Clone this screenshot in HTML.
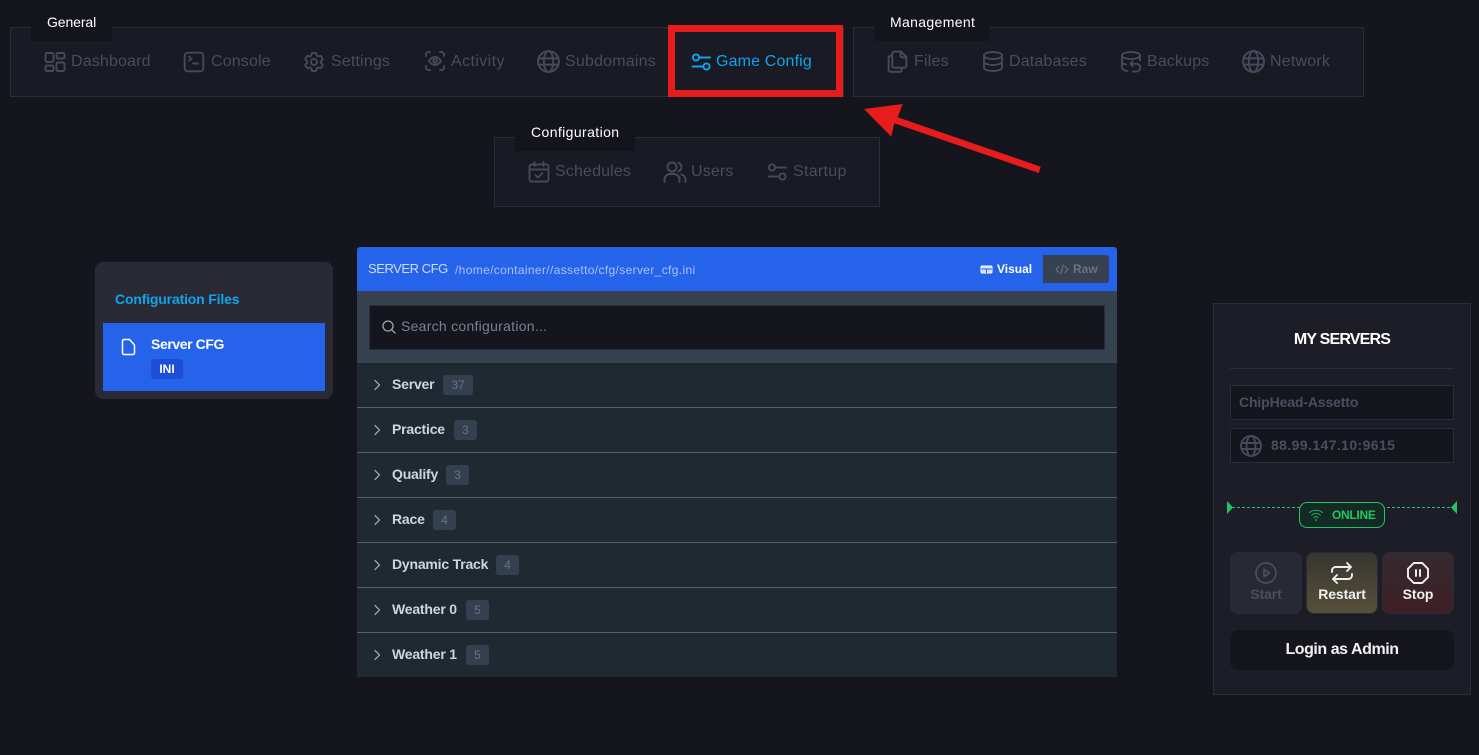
<!DOCTYPE html>
<html>
<head>
<meta charset="utf-8">
<style>
html,body{margin:0;padding:0;width:1479px;height:755px;overflow:hidden;background:#14151d;font-family:"Liberation Sans",sans-serif}
.a{position:absolute}
.t{position:absolute;white-space:nowrap;line-height:20px;height:20px}
.box{position:absolute;background:#191a23;border:1px solid #2a2c38;box-sizing:border-box}
.tab{position:absolute;background:#13141c;box-sizing:border-box}
.lab{position:absolute;white-space:nowrap;color:#fff;font-size:14px;line-height:20px;height:20px}
.n{position:absolute;white-space:nowrap;color:#474d5c;font-size:16px;line-height:22px;height:22px;letter-spacing:.15px}
svg.i{position:absolute;fill:none;stroke:#444a59;stroke-width:1.9;stroke-linecap:round;stroke-linejoin:round}
.row{position:absolute;left:357px;width:760px;height:45px;background:#1f2932;border-bottom:1px solid #56606c;box-sizing:border-box}
.rt{position:absolute;white-space:nowrap;left:392px;color:#d1d5db;font-size:14px;font-weight:700;line-height:20px;height:20px;letter-spacing:-.2px}
.b{position:absolute;height:20px;background:#344050;border-radius:3px;color:#6b7280;font-size:12px;line-height:20px;text-align:center}
svg.c{position:absolute;left:371px;width:12px;height:12px;fill:none;stroke:#9ca3af;stroke-width:1.3;stroke-linecap:round;stroke-linejoin:round}
.btn{position:absolute;top:552px;width:72px;height:62px;border-radius:8px;box-sizing:border-box;border:1px solid #2a2c38}
.bl{position:absolute;left:0;width:100%;text-align:center;top:31px;font-size:14px;font-weight:700;line-height:20px;letter-spacing:-.1px}
</style>
</head>
<body>
<!-- nav boxes -->
<div class="box" style="left:10px;top:27px;width:834px;height:70px"></div>
<div class="tab" style="left:31px;top:10px;width:81px;height:31px"></div>
<div class="lab" style="left:47px;top:12px;letter-spacing:-.1px">General</div>

<div class="box" style="left:853px;top:27px;width:511px;height:70px"></div>
<div class="tab" style="left:874px;top:10px;width:116px;height:31px"></div>
<div class="lab" style="left:890px;top:12px;letter-spacing:.35px">Management</div>

<div class="box" style="left:494px;top:137px;width:386px;height:70px"></div>
<div class="tab" style="left:515px;top:120px;width:120px;height:31px"></div>
<div class="lab" style="left:531px;top:122px;letter-spacing:.4px">Configuration</div>

<!-- General -->
<svg class="i" style="left:43px;top:50px" width="24" height="24" viewBox="0 0 24 24"><path d="M4 3h5a1.500 1.500 0 0 1 1.500 1.500v6a1.500 1.500 0 0 1-1.500 1.500h-5a1.500 1.500 0 0 1-1.500-1.500v-6a1.500 1.500 0 0 1 1.500-1.500zM4 15.500h5a1.500 1.500 0 0 1 1.500 1.500v2.500a1.500 1.500 0 0 1-1.500 1.500h-5a1.500 1.500 0 0 1-1.500-1.500v-2.500a1.500 1.500 0 0 1 1.500-1.500zM15 12.500h5a1.500 1.500 0 0 1 1.500 1.500v5.500a1.500 1.500 0 0 1-1.500 1.500h-5a1.500 1.500 0 0 1-1.500-1.500v-5.500a1.500 1.500 0 0 1 1.500-1.500zM15 3h5a1.500 1.500 0 0 1 1.500 1.500v2.500a1.500 1.500 0 0 1-1.500 1.500h-5a1.500 1.500 0 0 1-1.500-1.500v-2.500a1.500 1.500 0 0 1 1.500-1.500z"/></svg>
<div class="n" style="left:71px;top:51px">Dashboard</div>

<svg class="i" style="left:182px;top:50px" width="24" height="24" viewBox="0 0 24 24"><path d="M5.500 2.700h13a3 3 0 0 1 2.800 2.800v13a3 3 0 0 1-2.800 2.800h-13a3 3 0 0 1-2.800-2.800v-13a3 3 0 0 1 2.800-2.800zM7 6.800l2.500 1.900L7 10.600M11 13.500h5"/></svg>
<div class="n" style="left:211px;top:51px">Console</div>

<svg class="i" style="left:302px;top:50px" width="24" height="24" viewBox="0 0 24 24"><path d="M9.594 3.940c.09-.542.56-.94 1.110-.94h2.593c.55 0 1.020.398 1.110.94l.213 1.281c.063.374.313.686.645.87.074.04.147.083.22.127.325.196.72.257 1.075.124l1.217-.456a1.125 1.125 0 0 1 1.370.49l1.296 2.247a1.125 1.125 0 0 1-.26 1.431l-1.003.827c-.293.241-.438.613-.43.992a7.723 7.723 0 0 1 0 .255c-.008.378.137.75.43.991l1.004.827c.424.35.534.955.26 1.430l-1.298 2.247a1.125 1.125 0 0 1-1.369.491l-1.217-.456c-.355-.133-.75-.072-1.076.124a6.470 6.470 0 0 1-.22.128c-.331.183-.581.495-.644.869l-.213 1.281c-.09.543-.56.94-1.110.94h-2.594c-.55 0-1.019-.398-1.110-.94l-.213-1.281c-.062-.374-.312-.686-.644-.87a6.520 6.520 0 0 1-.22-.127c-.325-.196-.72-.257-1.076-.124l-1.217.456a1.125 1.125 0 0 1-1.369-.49l-1.297-2.247a1.125 1.125 0 0 1 .26-1.431l1.004-.827c.292-.24.437-.613.43-.991a6.932 6.932 0 0 1 0-.255c.007-.38-.138-.751-.43-.992l-1.004-.827a1.125 1.125 0 0 1-.26-1.430l1.297-2.247a1.125 1.125 0 0 1 1.370-.491l1.216.456c.356.133.751.072 1.076-.124.072-.044.146-.086.22-.128.332-.183.582-.495.644-.869l.214-1.280Z"/><path d="M15 12a3 3 0 1 1-6 0 3 3 0 0 1 6 0Z"/></svg>
<div class="n" style="left:331px;top:51px">Settings</div>

<svg class="i" style="left:423px;top:49px" width="24" height="24" viewBox="0 0 24 24"><path d="M3 7V5.500A2.500 2.500 0 0 1 5.500 3H7M17 3h1.500A2.500 2.500 0 0 1 21 5.500V7M21 17v1.500a2.500 2.500 0 0 1-2.500 2.500H17M7 21H5.500A2.500 2.500 0 0 1 3 18.500V17"/><path d="M6 12c1.800-2.800 3.800-4 6-4s4.200 1.200 6 4c-1.800 2.800-3.800 4-6 4s-4.200-1.200-6-4z"/><circle cx="12" cy="12" r="1.800"/></svg>
<div class="n" style="left:451px;top:51px;letter-spacing:.4px">Activity</div>

<svg class="i" style="left:536px;top:49px" width="25" height="25" viewBox="0 0 24 24"><circle cx="12" cy="12" r="10"/><ellipse cx="12" cy="12" rx="4.500" ry="10"/><path d="M2.600 9h18.800M2.600 15h18.800"/></svg>
<div class="n" style="left:565px;top:51px;letter-spacing:.2px">Subdomains</div>

<svg class="i" style="left:689px;top:50px;stroke:#0ea5e9" width="24" height="24" viewBox="0 0 24 24"><circle cx="7" cy="7.500" r="3.100"/><path d="M10.500 7.500h10.500M3.500 16.500h10.500"/><circle cx="17.500" cy="16.500" r="3.100"/></svg>
<div class="n" style="left:716px;top:51px;color:#0ea5e9">Game Config</div>

<!-- Management -->
<svg class="i" style="left:886px;top:49px" width="25" height="25" viewBox="0 0 24 24"><path d="M8 2.500h6.500l5 5V16a2 2 0 0 1-2 2H8a2 2 0 0 1-2-2V4.500a2 2 0 0 1 2-2zM14 2.500v4a1.500 1.500 0 0 0 1.500 1.500h4"/><path d="M6 6.500H4.500a2 2 0 0 0-2 2V20a2 2 0 0 0 2 2H13a2 2 0 0 0 2-2v-2"/></svg>
<div class="n" style="left:914px;top:51px;letter-spacing:.2px">Files</div>

<svg class="i" style="left:981px;top:49px" width="24" height="25" viewBox="0 0 24 24"><path d="M12 2.500c5 0 9 1.500 9 3.500s-4 3.500-9 3.500S3 8 3 6s4-3.500 9-3.500z"/><path d="M3 6v12c0 2 4 3.500 9 3.500s9-1.500 9-3.500V6M3 12c0 2 4 3.500 9 3.500s9-1.500 9-3.500"/></svg>
<div class="n" style="left:1009px;top:51px">Databases</div>

<svg class="i" style="left:1119px;top:49px" width="24" height="25" viewBox="0 0 24 24"><path d="M12 2.500c5 0 9 1.500 9 3.500s-4 3.500-9 3.500S3 8 3 6s4-3.500 9-3.500z"/><path d="M3 6v12c0 1.800 2.400 3.100 5.500 3.400M21 6v5M3 12c0 1.400 1.600 2.500 4 3.100"/><path d="M13.500 12l-2 2.300 2 2.300M11.500 14.300h6a3.800 3.800 0 0 1 0 7.700h-3.500"/></svg>
<div class="n" style="left:1147px;top:51px">Backups</div>

<svg class="i" style="left:1241px;top:49px" width="25" height="25" viewBox="0 0 24 24"><circle cx="12" cy="12" r="10"/><ellipse cx="12" cy="12" rx="4.500" ry="10"/><path d="M2.600 9h18.800M2.600 15h18.800"/></svg>
<div class="n" style="left:1270px;top:51px;letter-spacing:.2px">Network</div>

<!-- Configuration -->
<svg class="i" style="left:527px;top:160px" width="24" height="24" viewBox="0 0 24 24"><path d="M4.500 4.500h15A2 2 0 0 1 21.500 6.500v13a2 2 0 0 1-2 2h-15a2 2 0 0 1-2-2v-13a2 2 0 0 1 2-2zM2.500 9.500h19M7.500 2v4M16.500 2v4M8.500 15l2.500 2.500 4.500-4.500"/></svg>
<div class="n" style="left:555px;top:161px">Schedules</div>

<svg class="i" style="left:663px;top:160px" width="24" height="24" viewBox="0 0 24 24"><circle cx="9" cy="7" r="4.500"/><path d="M1.500 22v-2.500A5.500 5.500 0 0 1 7 14h4a5.500 5.500 0 0 1 5.500 5.500V22M15.500 2.800a4.500 4.500 0 0 1 0 8.400M18.500 14.400a5.500 5.500 0 0 1 4 5.100V22"/></svg>
<div class="n" style="left:691px;top:161px">Users</div>

<svg class="i" style="left:765px;top:160px" width="24" height="24" viewBox="0 0 24 24"><circle cx="7" cy="7.500" r="3.100"/><path d="M10.500 7.500h10.500M3.500 16.500h10.500"/><circle cx="17.500" cy="16.500" r="3.100"/></svg>
<div class="n" style="left:793px;top:161px;letter-spacing:.3px">Startup</div>

<!-- annotation -->
<div class="a" style="left:668px;top:25px;width:175px;height:72px;border:7px solid #e71c1c;box-sizing:border-box"></div>
<svg class="a" style="left:0;top:0" width="1479" height="755"><polygon fill="#e71c1c" points="864,109 902.700,104 897.700,117.300 1040.700,166.700 1038.700,173 894.300,123.300 891.300,136.700"/></svg>

<!-- left card -->
<div class="a" style="left:95px;top:262px;width:238px;height:137px;background:#2a2a37;border-radius:8px"></div>
<div class="t" style="left:115px;top:289px;color:#0ea5e9;font-size:14px;font-weight:700;letter-spacing:-.17px">Configuration Files</div>
<div class="a" style="left:103px;top:323px;width:222px;height:68px;background:#2563eb"></div>
<svg class="a" style="left:120px;top:338px;fill:none;stroke:#fff;stroke-width:1.500;stroke-linejoin:round" width="18" height="18" viewBox="0 0 18 18"><path d="M4 1.500h5.500L14.500 7v8a1.500 1.500 0 0 1-1.500 1.500H4A1.500 1.500 0 0 1 2.500 15V3A1.500 1.500 0 0 1 4 1.500z"/></svg>
<div class="t" style="left:151px;top:334px;color:#fff;font-size:14px;font-weight:700;letter-spacing:-.4px">Server CFG</div>
<div class="a" style="left:151px;top:359px;width:32px;height:20px;background:#1d4ed8;border-radius:3px;color:#fff;font-size:12px;font-weight:700;line-height:20px;text-align:center">INI</div>

<!-- main panel -->
<div class="a" style="left:357px;top:247px;width:760px;height:44px;background:#2563eb;border-radius:3px 3px 0 0"></div>
<div class="t" style="left:368px;top:259px;color:#d0dcfb;font-size:13px;letter-spacing:-.45px">SERVER CFG</div>
<div class="t" style="left:455px;top:260px;color:#a9c3f8;font-size:12px;letter-spacing:.35px">/home/container//assetto/cfg/server_cfg.ini</div>
<svg class="a" style="left:980px;top:264px" width="13" height="11" viewBox="0 0 13 11"><rect x="1" y="2" width="11" height="7" rx="1" fill="#cfe0ff" stroke="#fff"/><path d="M1 5h11M6.500 5v4" stroke="#2563eb" stroke-width="1"/></svg>
<div class="t" style="left:997px;top:259px;color:#fff;font-size:12px;font-weight:700">Visual</div>
<div class="a" style="left:1043px;top:255px;width:66px;height:28px;background:#374151;border-radius:0 3px 3px 0"></div>
<svg class="a" style="left:1055px;top:263px;fill:none;stroke:#6b7280;stroke-width:1.100;stroke-linecap:round;stroke-linejoin:round" width="14" height="13" viewBox="0 0 14 13"><path d="M4 3.500L1 6.500l3 3M10 3.500l3 3-3 3M8.300 2L5.700 11"/></svg>
<div class="t" style="left:1073px;top:259px;color:#6b7280;font-size:12px;font-weight:700">Raw</div>

<div class="a" style="left:357px;top:291px;width:760px;height:73px;background:#36424f;border-bottom:1px solid #465260;box-sizing:border-box"></div>
<div class="a" style="left:369px;top:305px;width:736px;height:45px;background:#14151d;border:1px solid #2a2c38;box-sizing:border-box"></div>
<svg class="a" style="left:381px;top:319px;fill:none;stroke:#9ca3af;stroke-width:1.300;stroke-linecap:round" width="16" height="16" viewBox="0 0 16 16"><circle cx="7" cy="7" r="5"/><path d="M10.700 10.700L14 14"/></svg>
<div class="t" style="left:401px;top:316px;color:#7b8190;font-size:14px;letter-spacing:.27px">Search configuration...</div>

<div class="row" style="top:363px"></div>
<div class="row" style="top:408px"></div>
<div class="row" style="top:453px"></div>
<div class="row" style="top:498px"></div>
<div class="row" style="top:543px"></div>
<div class="row" style="top:588px"></div>
<div class="row" style="top:633px;height:44px;border-bottom:none"></div>

<svg class="c" style="top:379px" viewBox="0 0 12 12"><path d="M4 1.500l4.500 4.500L4 10.500"/></svg>
<div class="rt" style="top:374px">Server</div><div class="b" style="left:443px;top:375px;width:30px">37</div>
<svg class="c" style="top:424px" viewBox="0 0 12 12"><path d="M4 1.500l4.500 4.500L4 10.500"/></svg>
<div class="rt" style="top:419px">Practice</div><div class="b" style="left:454px;top:420px;width:23px">3</div>
<svg class="c" style="top:469px" viewBox="0 0 12 12"><path d="M4 1.500l4.500 4.500L4 10.500"/></svg>
<div class="rt" style="top:464px">Qualify</div><div class="b" style="left:446px;top:465px;width:23px">3</div>
<svg class="c" style="top:514px" viewBox="0 0 12 12"><path d="M4 1.500l4.500 4.500L4 10.500"/></svg>
<div class="rt" style="top:509px">Race</div><div class="b" style="left:433px;top:510px;width:23px">4</div>
<svg class="c" style="top:559px" viewBox="0 0 12 12"><path d="M4 1.500l4.500 4.500L4 10.500"/></svg>
<div class="rt" style="top:554px">Dynamic Track</div><div class="b" style="left:496px;top:555px;width:23px">4</div>
<svg class="c" style="top:604px" viewBox="0 0 12 12"><path d="M4 1.500l4.500 4.500L4 10.500"/></svg>
<div class="rt" style="top:599px">Weather 0</div><div class="b" style="left:466px;top:600px;width:23px">5</div>
<svg class="c" style="top:649px" viewBox="0 0 12 12"><path d="M4 1.500l4.500 4.500L4 10.500"/></svg>
<div class="rt" style="top:644px">Weather 1</div><div class="b" style="left:466px;top:645px;width:23px">5</div>

<!-- right panel -->
<div class="a" style="left:1213px;top:303px;width:258px;height:392px;background:#1c1d27;border:1px solid #2b2d38;box-sizing:border-box"></div>
<div class="t" style="left:1213px;width:258px;text-align:center;top:330px;color:#fff;font-size:16px;font-weight:700;letter-spacing:-.8px">MY SERVERS</div>
<div class="a" style="left:1230px;top:368px;width:224px;height:1px;background:#2b2d38"></div>
<div class="a" style="left:1230px;top:385px;width:224px;height:35px;background:#14151d;border:1px solid #2b2d38;box-sizing:border-box"></div>
<div class="t" style="left:1239px;top:392px;color:#4a4f5d;font-size:14px;font-weight:700;letter-spacing:-.13px">ChipHead-Assetto</div>
<div class="a" style="left:1230px;top:428px;width:224px;height:35px;background:#14151d;border:1px solid #2b2d38;box-sizing:border-box"></div>
<svg class="i" style="left:1239px;top:434px" width="24" height="24" viewBox="0 0 24 24"><circle cx="12" cy="12" r="10"/><ellipse cx="12" cy="12" rx="4.500" ry="10"/><path d="M2.600 9h18.800M2.600 15h18.800"/></svg>
<div class="t" style="left:1271px;top:435px;color:#4a4f5d;font-size:14px;font-weight:700;letter-spacing:.4px">88.99.147.10:9615</div>

<!-- online -->
<svg class="a" style="left:1232px;top:506px" width="220" height="3"><path d="M0 1.500H220" stroke="#22c55e" stroke-width="1" stroke-dasharray="3 2"/></svg>
<svg class="a" style="left:1227px;top:501px" width="6" height="13"><polygon points="0,0 6,6.500 0,13" fill="#22c55e"/></svg>
<svg class="a" style="left:1451px;top:501px" width="6" height="13"><polygon points="6,0 0,6.500 6,13" fill="#22c55e"/></svg>
<div class="a" style="left:1299px;top:502px;width:86px;height:26px;background:#162a25;border:1px solid #22c55e;border-radius:8px;box-sizing:border-box"></div>
<svg class="a" style="left:1308px;top:507px;fill:none;stroke:#22a55a;stroke-width:1.100;stroke-linecap:round" width="16" height="16" viewBox="0 0 16 16"><path d="M1.500 5.500c3.700-3 9.300-3 13 0M3.700 8c2.500-2 6.100-2 8.600 0M6 10.500c1.200-.9 2.800-.9 4 0"/><circle cx="8" cy="13" r=".4"/></svg>
<div class="t" style="left:1332px;top:505px;color:#22c55e;font-size:12px;font-weight:700;letter-spacing:-.3px">ONLINE</div>

<!-- buttons -->
<div class="btn" style="left:1230px;background:#282935">
  <svg class="a" style="left:23px;top:8px;fill:none;stroke:#4a4f5d;stroke-width:1.700;stroke-linejoin:round" width="24" height="24" viewBox="0 0 24 24"><circle cx="12" cy="12" r="10"/><path d="M10 8.500l5.500 3.500-5.500 3.500z"/></svg>
  <div class="bl" style="color:#4a4f5d">Start</div>
</div>
<div class="btn" style="left:1306px;background:linear-gradient(#363530,#57503a)">
  <svg class="a" style="left:23px;top:8px;fill:none;stroke:#eee;stroke-width:1.900;stroke-linecap:round;stroke-linejoin:round" width="24" height="24" viewBox="0 0 24 24"><path d="M2 11V9.500A3.500 3.500 0 0 1 5.500 6H21M17 2l4 4-4 4M22 13v1.500a3.500 3.500 0 0 1-3.500 3.500H3M7 22l-4-4 4-4"/></svg>
  <div class="bl" style="color:#f0f0f0">Restart</div>
</div>
<div class="btn" style="left:1382px;background:linear-gradient(#352a30,#3e1f25)">
  <svg class="a" style="left:23px;top:8px;fill:none;stroke:#f2f2f2;stroke-width:1.900;stroke-linecap:round;stroke-linejoin:round" width="24" height="24" viewBox="0 0 24 24"><polygon points="7.800,2 16.200,2 22,7.800 22,16.200 16.200,22 7.800,22 2,16.200 2,7.800"/><path d="M10 9v6M14 9v6"/></svg>
  <div class="bl" style="color:#f0f0f0">Stop</div>
</div>
<div class="a" style="left:1230px;top:630px;width:224px;height:40px;background:#14151d;border-radius:8px;color:#f2f2f2;font-size:16px;font-weight:700;line-height:39px;text-align:center;letter-spacing:-.45px">Login as Admin</div>
</body>
</html>
